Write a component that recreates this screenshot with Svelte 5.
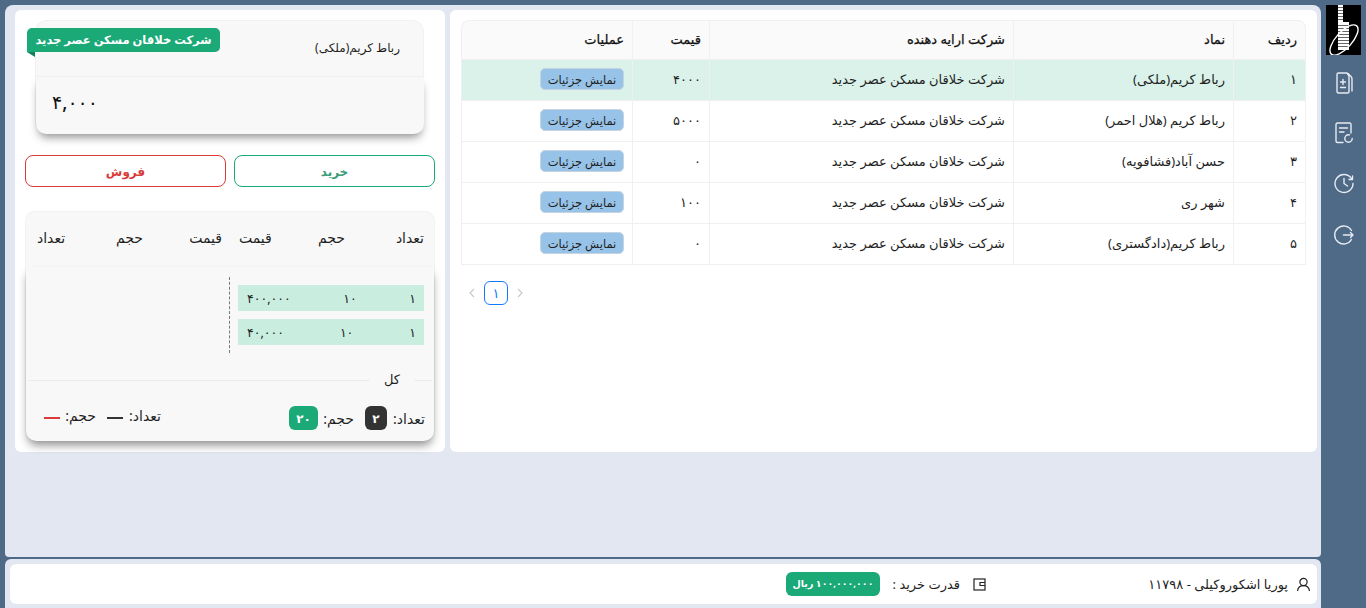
<script>
  const rows = [
    { n: '۱', sym: 'رباط کریم(ملکی)', price: '۴۰۰۰', active: true },
    { n: '۲', sym: 'رباط کریم (هلال احمر)', price: '۵۰۰۰' },
    { n: '۳', sym: 'حسن آباد(فشافویه)', price: '۰' },
    { n: '۴', sym: 'شهر ری', price: '۱۰۰' },
    { n: '۵', sym: 'رباط کریم(دادگستری)', price: '۰' }
  ];
  const orders = [
    { c: '۱', v: '۱۰', p: '۴۰۰,۰۰۰' },
    { c: '۱', v: '۱۰', p: '۴۰,۰۰۰' }
  ];
</script>

<div class="shell">
  <div class="content">
    <main class="main">
      <section class="panel left">
        <div class="symbol-card">
          <div class="ribbon">شرکت خلاقان مسکن عصر جدید</div>
          <div class="symbol-head">رباط کریم(ملکی)</div>
          <div class="symbol-price">۴,۰۰۰</div>
        </div>
        <div class="actions">
          <button class="buy">خرید</button>
          <button class="sell">فروش</button>
        </div>
        <div class="book">
          <div class="book-head">
            <div class="trip"><span>تعداد</span><span>حجم</span><span>قیمت</span></div>
            <div class="trip"><span>قیمت</span><span>حجم</span><span>تعداد</span></div>
          </div>
          <div class="book-body">
            <div class="book-rows">
              <div class="bids">
                {#each orders as o}
                  <div class="order"><span>{o.c}</span><span>{o.v}</span><span>{o.p}</span></div>
                {/each}
              </div>
            </div>
            <div class="total-line"><i></i><span>کل</span><i></i></div>
            <div class="totals">
              <div class="tot">
                <span class="la">تعداد:</span><b class="chip dark">۲</b>
                <span class="lb">حجم:</span><b class="chip green">۲۰</b>
              </div>
              <div class="tot raised">
                <span class="la">تعداد:</span><em class="dash black"></em>
                <span class="lb">حجم:</span><em class="dash red"></em>
              </div>
            </div>
          </div>
        </div>
      </section>

      <section class="panel right">
        <table>
          <colgroup>
            <col style="width:73px" /><col style="width:220px" /><col style="width:304px" /><col style="width:77px" /><col />
          </colgroup>
          <thead>
            <tr><th>ردیف</th><th>نماد</th><th>شرکت ارایه دهنده</th><th>قیمت</th><th>عملیات</th></tr>
          </thead>
          <tbody>
            {#each rows as r}
              <tr class:active={r.active}>
                <td class="idx">{r.n}</td>
                <td>{r.sym}</td>
                <td>شرکت خلاقان مسکن عصر جدید</td>
                <td>{r.price}</td>
                <td><button class="details">نمایش جزئیات</button></td>
              </tr>
            {/each}
          </tbody>
        </table>
        <div class="pager">
          <svg width="10" height="10" viewBox="0 0 10 10"><path d="M7 1 3 5l4 4" /></svg>
          <span class="page">۱</span>
          <svg width="10" height="10" viewBox="0 0 10 10"><path d="M3 1l4 4-4 4" /></svg>
        </div>
      </section>
    </main>

    <footer class="foot">
      <div class="foot-in">
        <svg class="fi user" width="15" height="15" viewBox="0 0 15 15"><circle cx="7.5" cy="5" r="3.6" /><path d="M1.5 14c.4-3.4 2.8-5.4 6-5.4s5.600 2 6 5.400" /></svg>
        <span class="uname">پوریا اشکوروکیلی - ۱۱۷۹۸</span>
        <svg class="fi wallet" width="13" height="13" viewBox="0 0 13 13"><rect x="1" y="1" width="11" height="11" /><path d="M12 4.500H7v3h5" /></svg>
        <span class="power">قدرت خرید :</span>
        <span class="balance">۱۰۰,۰۰۰,۰۰۰ ریال</span>
      </div>
    </footer>
  </div>

  <aside class="side">
    <svg class="logo" width="35" height="50" viewBox="0 0 35 50">
      <rect width="35" height="50" fill="#000" />
      <rect x="12" y="0" width="5" height="17" fill="#fff" />
      <rect x="12" y="17" width="11" height="28" fill="#fff" />
      <path d="M12 2.500h5M12 5.500h5M12 8.500h5M12 11.500h5M12 14.500h5M12 20.500h11M12 23.500h11M12 26.500h11M12 29.500h11M12 32.500h11M12 35.500h11M12 38.500h11M12 41.500h11" stroke="#666" stroke-width="1" />
      <ellipse cx="18" cy="35" rx="19" ry="8" transform="rotate(-48 18 35)" fill="none" stroke="#fff" stroke-width="1.400" />
    </svg>
    <svg class="si" width="20" height="22" viewBox="0 0 20 22">
      <path d="M13 1H4.500C3.500 1 3 1.600 3 2.500V19.500C3 20.400 3.500 21 4.500 21H13.500C14.500 21 15 20.400 15 19.500V4Z" />
      <path d="M9 7.500v5M6.500 10h5M6.500 15.500h5" />
      <path d="M14 1.500 17 4.500C17.800 5.300 18 5.800 18 7V19" />
    </svg>
    <svg class="si" width="20" height="22" viewBox="0 0 20 22">
      <path d="M9 20.500H3.500C2.500 20.500 2 20 2 19V2.500C2 1.500 2.500 1 3.500 1H15.500C16.500 1 17 1.500 17 2.500V11" />
      <path d="M5.500 6H13.500M5.500 10H10" />
      <circle cx="14.500" cy="16.500" r="3.700" stroke-dasharray="18 5" />
    </svg>
    <svg class="si" width="22" height="22" viewBox="0 0 22 22">
      <path d="M18.800 7A9 9 0 1 0 20 11.500" />
      <path d="M11 6.500v5l3.500 2.500" />
      <path d="M19.500 4v3.500H16" />
    </svg>
    <svg class="si last" width="22" height="22" viewBox="0 0 22 22">
      <path d="M18.500 6.500A9 9 0 1 0 18.500 15.500" />
      <path d="M10.500 11H20M17.500 8.500 20 11l-2.500 2.500" />
    </svg>
  </aside>
</div>

<style>
  :global(body) {
    margin: 0;
    background: #4f6a86;
    font-family: "Noto Sans", "DejaVu Sans", sans-serif;
    color: #1f1f1f;
  }
  .shell {
    display: grid;
    grid-template-columns: 1fr 45px;
    height: 608px;
    overflow: hidden;
  }
  .content {
    display: flex;
    flex-direction: column;
    padding: 5px 0 0 5px;
    min-width: 0;
  }
  .main {
    height: 552px;
    box-sizing: border-box;
    background: #e2e7f1;
    border-radius: 8px 8px 4px 4px;
    padding: 5px 4px 0 10px;
    display: flex;
    align-items: flex-start;
    gap: 5px;
  }
  .panel {
    background: #fff;
    border-radius: 6px;
    height: 442px;
    box-sizing: border-box;
  }
  .left { width: 430px; flex: none; padding: 10px 10px 0; position: relative; }
  .right { flex: 1; padding: 10px 11px 0; }

  .symbol-card {
    position: relative;
    margin: 0 11px 0 10px;
    height: 114px;
    background: #f8f8f8;
    border-radius: 12px;
    box-shadow: 0 0 0 1px #f1f1f1 inset;
  }
  .ribbon {
    position: absolute;
    left: -8px;
    top: 8px;
    width: 193px;
    height: 24px;
    background: #1aa977;
    color: #fff;
    border-radius: 5px 5px 5px 0;
    font-size: 11.5px;
    font-weight: 700;
    line-height: 23px;
    text-align: center;
    direction: rtl;
    white-space: nowrap;
  }
  .ribbon::after {
    content: "";
    position: absolute;
    left: 0;
    top: 24px;
    border-top: 5px solid #12805a;
    border-left: 8px solid transparent;
  }
  .symbol-head {
    height: 56px;
    box-sizing: border-box;
    direction: rtl;
    padding: 19px 24px 0 0;
    font-size: 12px;
    line-height: 18px;
  }
  .symbol-price {
    height: 58px;
    box-sizing: border-box;
    margin-left: 1px;
    background: #f8f8f8;
    border-radius: 0 0 10px 10px;
    box-shadow: 0 6px 10px -3px rgba(0,0,0,.45);
    border-top: 1px solid #f0f0f0;
    padding: 12px 16px;
    font-size: 19px;
    line-height: 26px;
    font-weight: 500;
    color: #111;
  }
  .actions {
    display: flex;
    flex-direction: row-reverse;
    gap: 8px;
    margin-top: 21px;
  }
  .actions button {
    flex: 1;
    height: 32px;
    background: #fff;
    border-radius: 8px;
    font: 700 12px "Noto Sans", "DejaVu Sans", sans-serif;
    padding: 0;
  }
  .buy { border: 1px solid #1aa977; color: #3a9b78; }
  .sell { border: 1px solid #d93a3a; color: #d93a3a; }

  .book {
    margin-top: 24px;
    height: 230px;
    background: #f8f8f8;
    border-radius: 10px;
    position: relative;
    box-shadow: 0 0 0 1px #f2f2f2 inset;
  }
  .book-head {
    height: 56px;
    display: flex;
    flex-direction: row-reverse;
    justify-content: space-between;
    direction: ltr;
    font-size: 14px;
    line-height: 54px;
    padding: 0 11px 0 12px;
  }
  .trip { display: grid; grid-template-columns: 1fr auto 1fr; direction: rtl; width: 185px; flex: none; }
  .trip span:nth-child(3) { text-align: left; }
  .book-body {
    background: #f8f8f8;
    margin: 0 1px;
    height: 174px;
    border-radius: 0 0 10px 10px;
    box-shadow: 0 6px 10px -2px rgba(0,0,0,.45);
    box-sizing: border-box;
    padding-top: 10px;
  }
  .book-rows { display: flex; justify-content: flex-end; padding-right: 10px; height: 76px; }
  .bids {
    width: 186px;
    padding: 8px 0 0 8px;
    border-left: 1px dashed #777;
    display: flex;
    flex-direction: column;
    gap: 8px;
    box-sizing: content-box;
  }
  .order {
    height: 26px;
    background: #c9eddf;
    display: flex;
    justify-content: space-between;
    direction: rtl;
    align-items: center;
    font-size: 12.5px;
    padding: 0 8px 0 9px;
  }
  .total-line { display: flex; flex-direction: row-reverse; align-items: center; margin-top: 16px; padding: 0 2px; gap: 14px; font-size: 13px; height: 20px; }
  .total-line i { height: 1px; background: #ececec; margin-top: 2px; }
  .total-line i:first-child { width: 18px; }
  .total-line i:last-child { flex: 1; }
  .totals { display: flex; flex-direction: row-reverse; justify-content: space-between; padding: 17px 9px 0 18px; direction: ltr; }
  .tot { display: flex; align-items: center; gap: 4px; direction: rtl; font-size: 14px; height: 24px; }
  .la { width: 34px; white-space: nowrap; }
  .lb { width: 32px; margin-right: 7px; white-space: nowrap; }
  .raised { margin-top: -3px; }
  .chip { display: inline-flex; align-items: center; justify-content: center; height: 24px; border-radius: 6px; color: #fff; font-size: 12px; }
  .chip.dark { background: #333; width: 22px; }
  .chip.green { background: #1aa977; width: 29px; }
  .dash { display: inline-block; width: 16px; height: 2px; margin-top: 6px; }
  .dash.black { background: #333; }
  .dash.red { background: #d93a3a; }

  table {
    width: 845px;
    table-layout: fixed;
    border-collapse: separate;
    border-spacing: 0;
    direction: rtl;
    font-size: 13px;
  }
  th, td {
    border-bottom: 1px solid #f0f0f0;
    border-left: 1px solid #f0f0f0;
    padding: 0 8px;
    text-align: right;
    box-sizing: border-box;
  }
  th {
    background: #fafafa;
    height: 40px;
    font-weight: 400;
    color: #111;
    -webkit-text-stroke: 0.25px #111;
    border-top: 1px solid #f0f0f0;
    padding-bottom: 2px;
  }
  th:first-child { border-top-right-radius: 8px; border-right: 1px solid #f0f0f0; }
  th:last-child { border-top-left-radius: 8px; }
  td { height: 41px; padding-bottom: 2px; }
  td:first-child { border-right: 1px solid #f0f0f0; }
  tr.active td { background: #daf2e9; }
  .details {
    width: 84px;
    height: 22px;
    background: #97c3e9;
    border: 1px solid #c6d3e0;
    border-radius: 5px;
    font: 11.5px "Noto Sans", "DejaVu Sans", sans-serif;
    color: #1f1f1f;
    padding: 0;
    display: block;
  }
  .pager { display: flex; align-items: center; gap: 7px; margin: 16px 0 0 6px; }
  .pager path { fill: none; stroke: #c9c9c9; stroke-width: 1.200; }
  .page {
    width: 24px;
    height: 24px;
    box-sizing: border-box;
    border: 1px solid #1677ff;
    border-radius: 6px;
    text-align: center;
    font-size: 13px;
    line-height: 22px;
    color: #1677ff;
  }

  .foot {
    margin-top: 2px;
    height: 49px;
    box-sizing: border-box;
    background: #e2e7f1;
    border-radius: 6px 6px 0 0;
    padding: 5px 4px 4px 5px;
  }
  .foot-in {
    height: 40px;
    background: #fff;
    border-radius: 6px;
    display: flex;
    direction: rtl;
    align-items: center;
    padding-right: 6px;
    font-size: 13px;
  }
  .fi { flex: none; fill: none; stroke: #222; stroke-width: 1.200; }
  .uname { margin-right: 8px; width: 302px; flex: none; white-space: nowrap; }
  .power { margin-right: 13px; width: 69px; flex: none; white-space: nowrap; }
  .balance {
    margin-right: 11px;
    width: 94px;
    flex: none;
    text-align: center;
    background: #1aa977;
    color: #fff;
    border-radius: 6px;
    height: 24px;
    line-height: 23px;
    font-size: 9.5px;
    font-weight: 700;
    white-space: nowrap;
  }

  .side {
    display: flex;
    flex-direction: column;
    align-items: center;
    padding-top: 5px;
  }
  .logo { flex: none; }
  .si { fill: none; stroke: #e6ebf2; stroke-width: 1.400; stroke-linecap: round; stroke-linejoin: round; margin-top: 17px; margin-bottom: 11px; }
  .si.last { margin-top: 19px; }
  button { cursor: pointer; }
</style>
